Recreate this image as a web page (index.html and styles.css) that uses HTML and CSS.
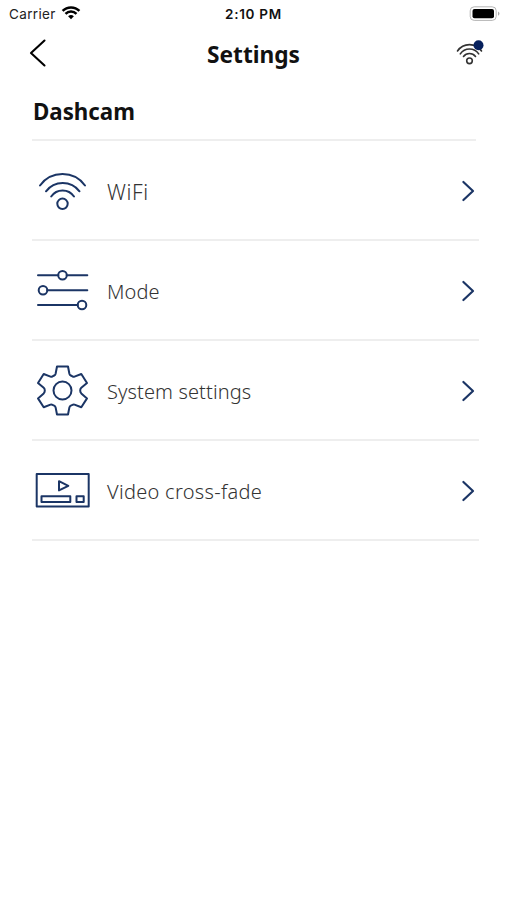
FILE: index.html
```html
<!DOCTYPE html>
<html lang="en">
<head>
<meta charset="utf-8">
<title>Settings</title>
<link rel="stylesheet" href="styles.css">
</head>
<body>
<div class="status">
  <div class="carrier"><span class="carrier-name">Carrier</span>
    <svg width="20" height="16" viewBox="0 0 20 16"><path d="M10 14.2 L7.1 11.3 A4.2 4.2 0 0 1 12.9 11.3 Z" fill="#000"/><path d="M4.5 8.8 A7.8 7.8 0 0 1 15.5 8.8 M1.6 5.9 A11.9 11.9 0 0 1 18.4 5.9" fill="none" stroke="#000" stroke-width="2.5"/></svg>
  </div>
  <div class="time">2:10 PM</div>
  <div class="battery"><svg width="32" height="16" viewBox="0 0 32 16"><rect x="1.2" y=".8" width="26" height="13.6" rx="4" fill="#fff" stroke="#b5b5b5"/><rect x="3.5" y="3" width="21.5" height="9.2" rx="2" fill="#000"/><path d="M29 5.5 Q32 7.6 29 9.7Z" fill="#aaa"/></svg></div>
</div>
<header class="nav">
  <svg class="back" width="20" height="30" viewBox="0 0 20 30"><path d="M16.5 1.5 L3 14 L16.5 26.5"/></svg>
  <h1><span class="title">Settings</span></h1>
  <svg class="signal" width="30" height="28" viewBox="0 0 30 28"><path d="M2.5 11 A14.5 14.5 0 0 1 26.5 11 M5.3 13.9 A11 11 0 0 1 23.7 13.9 M8.5 16.5 A7.5 7.5 0 0 1 20.5 16.5"/><circle cx="14.5" cy="20.8" r="2.8"/><circle class="dot" cx="23.5" cy="5.3" r="5"/></svg>
</header>
<main>
  <h2><span class="section">Dashcam</span></h2>
  <ul>
    <li>
      <svg class="icon" width="60" height="60" viewBox="0 0 60 60"><path d="M8 24.5 A27.8 27.8 0 0 1 53 24.5 M14 30.3 A21 21 0 0 1 47.5 30.3 M19.2 35.5 A13.8 13.8 0 0 1 42 35.5"/><circle cx="30.5" cy="42.8" r="5.2"/></svg>
      <span class="label wifi">WiFi</span>
      <svg class="chevron" width="16" height="24" viewBox="0 0 16 24"><path d="M3.4 3 L13 12 L3.4 21"/></svg>
    </li>
    <li>
      <svg class="icon" width="60" height="60" viewBox="0 0 60 60"><path d="M6 14.3H26.3M34.7 14.3H55.3M15.3 29.2H55.3M6 44H45.7"/><circle cx="30.5" cy="14.3" r="4.3"/><circle cx="11" cy="29.2" r="4.3"/><circle cx="50" cy="44" r="4.3"/></svg>
      <span class="label mode">Mode</span>
      <svg class="chevron" width="16" height="24" viewBox="0 0 16 24"><path d="M3.4 3 L13 12 L3.4 21"/></svg>
    </li>
    <li>
      <svg class="icon" width="60" height="60" viewBox="0 0 60 60"><path d="M25 5.5H36L37.4 12.8Q37.7 14 38.8 14.5L40.5 15.4Q41.5 16 42.5 15.6L49.3 13L55 22L49.3 26.8Q48.2 27.8 48.2 29.5T49.3 32.4L55 37.4L49.3 46.3L42.5 43.6Q41.5 43.2 40.5 43.8L38.8 44.7Q37.7 45.2 37.4 46.4L36 53.5H25L23.6 46.4Q23.3 45.2 22.2 44.7L20.5 43.8Q19.5 43.2 18.5 43.6L11.7 46.3L6 37.4L11.7 32.4Q12.8 31.2 12.8 29.5T11.7 26.8L6 22L11.7 13L18.5 15.6Q19.5 16 20.5 15.4L22.2 14.5Q23.3 14 23.6 12.8Z"/><circle cx="30.5" cy="29.5" r="9"/></svg>
      <span class="label system">System settings</span>
      <svg class="chevron" width="16" height="24" viewBox="0 0 16 24"><path d="M3.4 3 L13 12 L3.4 21"/></svg>
    </li>
    <li>
      <svg class="icon" width="60" height="60" viewBox="0 0 60 60"><path d="M4.7 12.9H56.7V45.5H4.7ZM9.5 35.3H38.3V41H9.5ZM44.5 35.3H51.7V41H44.5ZM27 20.2L36.3 24.8L27 29.4Z"/></svg>
      <span class="label video">Video cross-fade</span>
      <svg class="chevron" width="16" height="24" viewBox="0 0 16 24"><path d="M3.4 3 L13 12 L3.4 21"/></svg>
    </li>
  </ul>
</main>
</body>
</html>
```
FILE: styles.css
```css
* { box-sizing: border-box; }
body { margin: 0; min-height: 900px; background: #fff; color: #111; font-family: "Noto Sans", sans-serif; }
svg { display: block; flex: none; }
.status { display: grid; grid-template-columns: 1fr auto 1fr; align-items: center; height: 27px; padding: 0 6px 0 9px; font-family: Inter, sans-serif; font-size: 13.5px; }
.carrier { display: flex; align-items: center; gap: 5px; color: #222; }
.carrier-name { letter-spacing: .36px; }
.carrier svg { margin-bottom: 1px; }
.time { font-weight: 600; font-size: 13.5px; letter-spacing: .7px; margin-left: -3px; }
.battery { justify-self: end; }
.nav { display: grid; grid-template-columns: 60px 1fr 60px; align-items: center; height: 54px; padding: 0 22px 0 28px; }
.nav path, .nav circle { fill: none; }
.back { stroke: #000; stroke-width: 2.1; stroke-linecap: round; stroke-linejoin: round; }
h1, h2 { margin: 0; color: #111; font-weight: 700; }
h1 { padding-top: 1px; text-align: center; font-size: 22.7px; line-height: 54px; margin-left: -6px; }
.back, .signal { margin-bottom: 1px; }
.signal { justify-self: end; stroke: #333; stroke-width: 1.6; stroke-linecap: round; }
.nav .dot { fill: #06205c; stroke: none; }
main { padding: 0 28px 0 32px; }
h2 { height: 60px; width: 444px; padding-left: 1px; border-bottom: 2px solid #eee; font-size: 22.3px; line-height: 62px; }
ul { margin: 0; padding: 0; list-style: none; }
li { display: flex; align-items: center; height: 100px; padding-top: 2px; border-bottom: 2px solid #eee; }
.icon, .chevron { fill: none; stroke: #1b3565; stroke-width: 2; stroke-linecap: round; stroke-linejoin: round; }
.label { margin-left: 15px; padding-top: 1px; font-size: 20px; font-weight: 300; color: #333; line-height: 28px; white-space: nowrap; }
.wifi { font-size: 21px; letter-spacing: .6px; }
.mode { letter-spacing: .1px; }
.system { letter-spacing: .12px; }
.video { letter-spacing: .3px; }
.chevron { margin-left: auto; margin-right: 3px; stroke-width: 2.2; }
```
